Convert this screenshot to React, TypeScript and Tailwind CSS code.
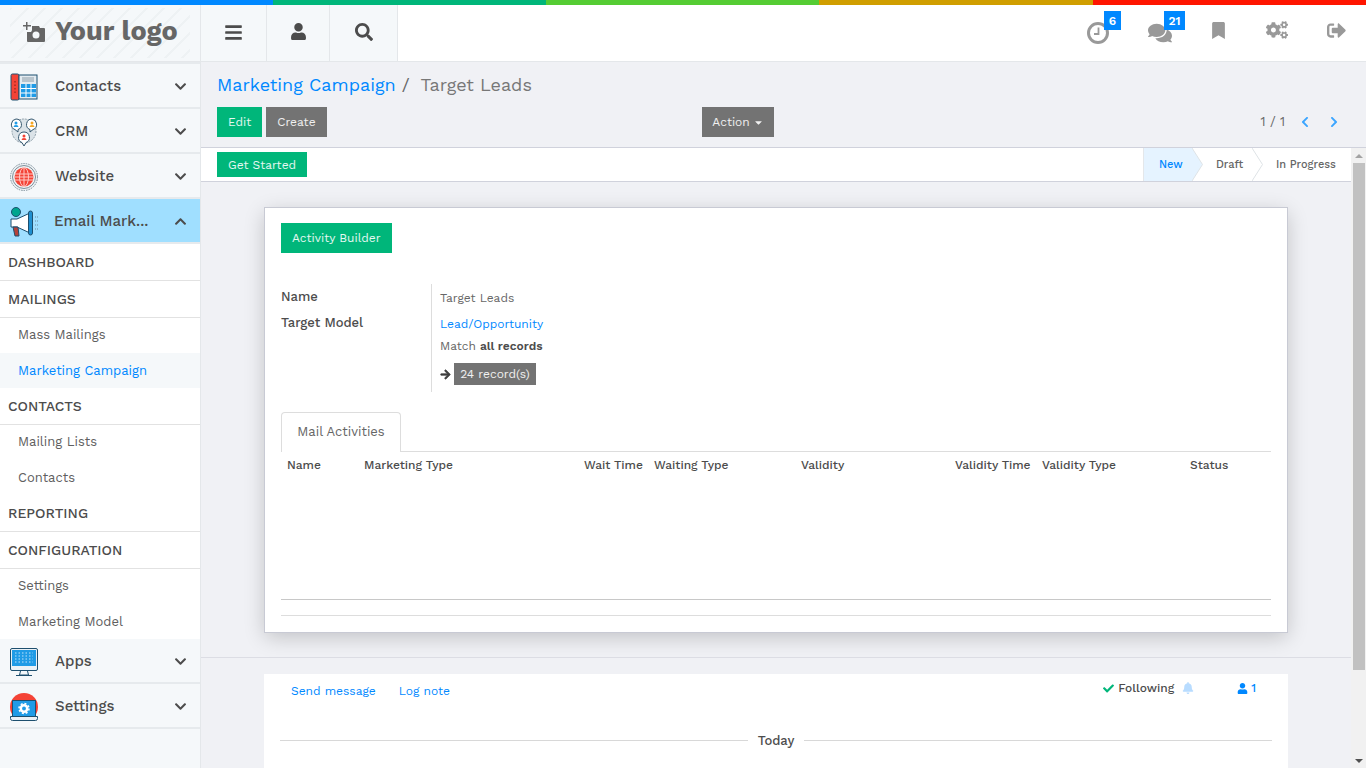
import {
  FaArrowRight,
  FaBars,
  FaBell,
  FaBookmark,
  FaCaretDown,
  FaCheck,
  FaChevronDown,
  FaChevronLeft,
  FaChevronRight,
  FaChevronUp,
  FaCogs,
  FaComments,
  FaSearch,
  FaSignOutAlt,
  FaUser,
} from "react-icons/fa";

const font = "font-['Work_Sans','Inter','Open_Sans',sans-serif]";

function PhoneIcon() {
  return (
    <svg width="28" height="28" viewBox="0 0 28 28">
      <rect x="1" y="1" width="8" height="26" rx="1.500" fill="#f44336" stroke="#1d4f6e" />
      <path d="M5 8v12" stroke="#a82a20" strokeWidth="1.500" strokeDasharray="1.500 2" />
      <rect x="9" y="2" width="18" height="24" fill="#e3ebf0" stroke="#1d4f6e" />
      <rect x="12" y="4" width="12" height="5" fill="#b8c4cc" />
      <rect x="11" y="11" width="15" height="13" fill="#1f9be6" />
      <path d="M11 15.500h15M11 20h15M16 11v13M21 11v13" stroke="#fff" />
    </svg>
  );
}

function CrmIcon() {
  return (
    <svg width="28" height="30" viewBox="0 0 28 30">
      <circle cx="14" cy="14" r="12" fill="#dbe3e8" stroke="#8fa0aa" strokeDasharray="2 1" />
      <path d="M6 2a5.500 5.500 0 0 1 2 10.600L8 15l-3-2.400A5.500 5.500 0 0 1 6 2z" fill="#fff" stroke="#33566e" />
      <path d="M22 2a5.500 5.500 0 0 0-2 10.600L20 15l3-2.400A5.500 5.500 0 0 0 22 2z" fill="#fff" stroke="#33566e" />
      <path d="M14 15a5.500 5.500 0 0 1 2 10.600L14 29l-2-3.400A5.500 5.500 0 0 1 14 15z" fill="#fff" stroke="#33566e" />
      <circle cx="6" cy="6" r="1.500" fill="#1f9be6" />
      <path d="M3.500 10a2.500 2 0 0 1 5 0z" fill="#1f9be6" />
      <circle cx="22" cy="6" r="1.500" fill="#f5a623" />
      <path d="M19.500 10a2.500 2 0 0 1 5 0z" fill="#f5a623" />
      <circle cx="14" cy="19" r="1.500" fill="#f44336" />
      <path d="M11.500 23a2.500 2 0 0 1 5 0z" fill="#f44336" />
    </svg>
  );
}

function GlobeIcon() {
  return (
    <svg width="28" height="28" viewBox="0 0 28 28">
      <circle cx="14" cy="14" r="13.500" fill="#eef2f4" stroke="#7d8f9b" strokeDasharray="1.500 1" />
      <circle cx="14" cy="14" r="11.500" fill="none" stroke="#7d8f9b" />
      <circle cx="14" cy="14" r="9.500" fill="#f44336" />
      <g fill="none" stroke="#ffc9c4">
        <ellipse cx="14" cy="14" rx="4.500" ry="9.500" />
        <path d="M14 4.500v19M4.500 11h19M4.500 14h19M4.500 17h19" />
      </g>
    </svg>
  );
}

function MegaphoneIcon() {
  return (
    <svg width="28" height="30" viewBox="0 0 28 30">
      <circle cx="6" cy="5" r="4.500" fill="#00a58e" stroke="#1d4f6e" />
      <path d="M1 12h6l13-6v20l-13-6H1z" fill="#fff" stroke="#1d4f6e" />
      <rect x="18.500" y="4" width="4" height="24" rx="2" fill="#1f8fd0" stroke="#1d4f6e" />
      <path d="M3 20h5l1 9H5z" fill="#b5413a" stroke="#1d4f6e" />
      <path d="M25 10h3M25 14h3M25 18h3M25 22h3" stroke="#6c8da3" strokeDasharray="1 1" />
    </svg>
  );
}

function MonitorIcon() {
  return (
    <svg width="28" height="28" viewBox="0 0 28 28">
      <rect x="0.500" y="0.500" width="27" height="22" rx="1.500" fill="#eaf1f6" stroke="#1d4f6e" />
      <rect x="2" y="2" width="24" height="16" fill="#1f9be6" />
      <path d="M5 5h18M5 8h18M5 11h18M5 14h18" stroke="#bfe3fa" strokeDasharray="1.500 2" />
      <path d="M10.500 23l-1 4h9l-1-4M6 27.500h16" fill="none" stroke="#1d4f6e" />
    </svg>
  );
}

function LaptopIcon() {
  return (
    <svg width="28" height="28" viewBox="0 0 28 28">
      <circle cx="14" cy="14" r="14" fill="#f44336" />
      <rect x="2.500" y="7.500" width="23" height="16" fill="#1f9be6" stroke="#1d4f6e" />
      <path d="M0.500 23.500h27v2a2 2 0 0 1-2 2h-23a2 2 0 0 1-2-2z" fill="#eaf1f6" stroke="#1d4f6e" />
      <circle cx="14" cy="15.500" r="3.200" fill="none" stroke="#fff" strokeWidth="2.500" />
      <circle cx="14" cy="15.500" r="5" fill="none" stroke="#fff" strokeWidth="1.500" strokeDasharray="2 1.900" />
    </svg>
  );
}

function MainMenu({ icon, label, open }: { icon: React.ReactNode; label: string; open?: boolean }) {
  return (
    <div
      className={`flex h-[45px] shrink-0 items-center border-b-2 border-[#e6eaed] pt-[2px] pr-[13px] pl-[10px] ${open ? "border-b-0 bg-[#a0dfff]" : "bg-[#f5f8fa]"}`}
    >
      <div className={`flex justify-start ${open ? "w-[44px]" : "w-[45px]"}`}>{icon}</div>
      <span className="flex-1 text-[15px] font-medium text-[#4c4c4c]">{label}</span>
      {open ? (
        <FaChevronUp size={13} className="text-[#4c4c4c]" />
      ) : (
        <FaChevronDown size={13} className="text-[#4c4c4c]" />
      )}
    </div>
  );
}

function SubHead({ label }: { label: string }) {
  return (
    <div className="flex h-[37px] items-center border-b border-[#e2e2e2] bg-white pl-2 text-[14px] font-medium text-[#4c4c4c]">
      {label}
    </div>
  );
}

function SubItem({ label, active, first }: { label: string; active?: boolean; first?: boolean }) {
  return (
    <div
      className={`flex h-[35px] items-center pl-[18px] text-[13px] ${first ? "pb-[2px]" : ""} ${active ? "bg-[#f5f8fa] text-[#0088ff]" : "bg-white text-[#5f5f5f]"}`}
    >
      {label}
    </div>
  );
}

function Sidebar() {
  return (
    <aside className="flex w-[201px] shrink-0 flex-col border-r border-[#e4e7ea] bg-[#f5f8fa]">
      <div className="h-[2px] bg-[#e6eaed]" />
      <MainMenu icon={<PhoneIcon />} label="Contacts" />
      <MainMenu icon={<CrmIcon />} label="CRM" />
      <MainMenu icon={<GlobeIcon />} label="Website" />
      <MainMenu icon={<MegaphoneIcon />} label="Email Mark..." open />
      <SubHead label="DASHBOARD" />
      <SubHead label="MAILINGS" />
      <SubItem label="Mass Mailings" first />
      <SubItem label="Marketing Campaign" active />
      <SubHead label="CONTACTS" />
      <SubItem label="Mailing Lists" first />
      <SubItem label="Contacts" />
      <SubHead label="REPORTING" />
      <SubHead label="CONFIGURATION" />
      <SubItem label="Settings" first />
      <SubItem label="Marketing Model" />
      <MainMenu icon={<MonitorIcon />} label="Apps" />
      <MainMenu icon={<LaptopIcon />} label="Settings" />
    </aside>
  );
}

function TopBar() {
  return (
    <header className="flex h-[57px] shrink-0 items-stretch border-b border-[#e4e7ea] bg-white">
      <div className="flex w-[201px] shrink-0 items-center border-r border-[#e4e7ea] bg-[#f5f8fa] py-[3px] pl-[10px] pr-[10px]">
        <div className="flex h-full w-full items-center gap-[10px] bg-[repeating-linear-gradient(135deg,#eef2f4_0,#eef2f4_2px,#f5f8fa_2px,#f5f8fa_12px)] pb-[3px] pl-[13px]">
          <svg width="22" height="22" viewBox="0 0 22 22" fill="#666">
            <path d="M3 1h1.500v3H8v1.500H4.500V9H3V5.500H0V4h3z" />
            <path d="M9 5h7l1 2h4a1 1 0 0 1 1 1v12a1 1 0 0 1-1 1H5a1 1 0 0 1-1-1V11h4a3 3 0 0 0 1-2z" />
            <circle cx="13" cy="14" r="3.500" fill="#f5f8fa" />
          </svg>
          <span className="text-[27px] leading-none font-bold text-[#666]">Your logo</span>
        </div>
      </div>
      <div className="flex h-full w-[66px] items-center justify-center border-r border-[#e4e7ea] bg-[#f5f8fa] pb-[2px] text-[#4c4c4c]">
        <FaBars size={19} />
      </div>
      <div className="flex h-full w-[63px] items-center justify-center border-r border-[#e4e7ea] bg-[#f5f8fa] pb-[3px] text-[#4c4c4c]">
        <FaUser size={17} />
      </div>
      <div className="flex h-full w-[68px] items-center justify-center border-r border-[#e4e7ea] bg-[#f5f8fa] pb-[2px] text-[#4c4c4c]">
        <FaSearch size={18} />
      </div>
      <div className="flex-1" />
      <div className="flex items-stretch gap-[39px] pr-[20px] text-[#999]">
        <div className="relative flex items-center">
          <svg width="22" height="22" viewBox="0 0 22 22" fill="none" stroke="#999">
            <circle cx="11" cy="11" r="9.500" strokeWidth="3" />
            <path d="M11.500 5.500v6.500H7" strokeWidth="1.800" />
          </svg>
          <span className="absolute top-[6px] left-[17px] flex h-[19px] w-[17px] items-center justify-center bg-[#0088ff] text-[12px] font-semibold text-white">
            6
          </span>
        </div>
        <div className="relative -mr-px flex items-center">
          <FaComments size={24} />
          <span className="absolute top-[6px] left-[16px] flex h-[19px] w-[21px] items-center justify-center bg-[#0088ff] text-[12px] font-semibold text-white">
            21
          </span>
        </div>
        <div className="flex items-center pb-[6px]">
          <FaBookmark size={17} />
        </div>
        <div className="flex items-center pb-[6px]">
          <FaCogs size={22} />
        </div>
        <div className="flex items-center pb-[6px]">
          <FaSignOutAlt size={19} />
        </div>
      </div>
    </header>
  );
}

function Btn({ label, color, h = "h-[30px]" }: { label: string; color: string; h?: string }) {
  return (
    <span className={`flex items-center px-[11px] text-[12px] text-white/90 ${h} ${color}`}>{label}</span>
  );
}

function ControlPanel() {
  return (
    <div className="shrink-0 bg-[#f0f1f5]">
      <div className="flex h-[45px] items-center pl-[16px] text-[18px]">
        <span className="text-[#0088ff]">Marketing Campaign</span>
        <span className="ml-[6px] text-[#666]">/</span>
        <span className="ml-[11px] text-[#777]">Target Leads</span>
      </div>
      <div className="flex h-[40px] items-start pl-[16px]">
        <div className="flex gap-[4px]">
          <Btn label="Edit" color="bg-[#00b67a]" />
          <Btn label="Create" color="bg-[#737373]" />
        </div>
        <div className="ml-[375px]">
          <span className="flex h-[30px] w-[72px] items-center justify-center gap-[3px] bg-[#737373] pl-[1px] text-[12px] text-white/90">
            Action <FaCaretDown size={11} />
          </span>
        </div>
        <div className="ml-auto flex h-[30px] items-center pr-[26px] text-[13px] text-[#666]">
          <span>1 / 1</span>
          <FaChevronLeft size={12} className="ml-[14px] text-[#3ba5ff]" />
          <FaChevronRight size={12} className="ml-[17px] text-[#3ba5ff]" />
        </div>
      </div>
    </div>
  );
}

function StatusBar() {
  return (
    <div className="flex h-[34px] shrink-0 items-center justify-between border-b border-[#d0d2dc] bg-white pl-[16px]">
      <Btn label="Get Started" color="bg-[#00b67a]" h="h-[25px]" />
      <div className="flex h-full items-center text-[11px] font-medium">
        <div className="relative flex h-full w-[49px] items-center border-l border-[#e4e7ea] bg-[#e5f3ff] pt-[2px] pl-[15px] text-[#0088ff]">
          New
          <svg width="11" height="33" viewBox="0 0 11 33" className="absolute top-0 left-full z-10">
            <path d="M0 0l10.500 16.500L0 33z" fill="#e5f3ff" />
            <path d="M0 0l10.500 16.500L0 33" fill="none" stroke="#dfe3e6" />
          </svg>
        </div>
        <div className="relative flex h-full w-[60px] items-center pt-[2px] pl-[24px] text-[#666]">
          Draft
          <svg width="11" height="33" viewBox="0 0 11 33" className="absolute top-0 left-full">
            <path d="M0 0l10.500 16.500L0 33" fill="#fff" stroke="#dfe3e6" />
          </svg>
        </div>
        <div className="flex h-full w-[99px] items-center pt-[2px] pl-[24px] text-[#666]">In Progress</div>
      </div>
    </div>
  );
}

function Sheet() {
  const cols = [
    { label: "Name", w: "w-[77px]" },
    { label: "Marketing Type", w: "w-[220px]" },
    { label: "Wait Time", w: "w-[70px]" },
    { label: "Waiting Type", w: "w-[147px]" },
    { label: "Validity", w: "w-[154px]" },
    { label: "Validity Time", w: "w-[87px]" },
    { label: "Validity Type", w: "w-[148px]" },
    { label: "Status", w: "w-[70px]" },
  ];
  return (
    <div className="mx-[63px] mt-[25px] h-[426px] border border-[#c8cad4] bg-white px-[16px] pt-[15px] shadow-[0_5px_20px_-1px_rgba(0,0,0,0.2)]">
      <span className="inline-flex h-[30px] items-center bg-[#00b67a] px-[11px] align-top text-[12px] text-white/90">
        Activity Builder
      </span>
      <div className="mt-[31px] flex h-[108px]">
        <div className="w-[150px] text-[13px] font-medium text-[#4c4c4c]">
          <div className="flex h-[26px] items-center">Name</div>
          <div className="flex h-[26px] items-center">Target Model</div>
        </div>
        <div className="border-l border-[#ddd] pl-[8px] text-[12px] text-[#666]">
          <div className="flex h-[27px] items-center">Target Leads</div>
          <div className="flex h-[25px] items-center text-[#0088ff]">Lead/Opportunity</div>
          <div className="flex h-[19px] items-center">
            Match <b className="ml-1 font-semibold text-[#4c4c4c]">all records</b>
          </div>
          <div className="mt-[8px] flex items-center">
            <FaArrowRight size={11} className="stroke-current stroke-[30] text-[#3f3f3f]" />
            <span className="ml-[3px] flex h-[22px] w-[82px] items-center justify-center bg-[#737373] text-white/90">
              24 record(s)
            </span>
          </div>
        </div>
      </div>
      <div className="mt-[20px] flex h-[40px] border-b border-[#ddd]">
        <div className="relative z-10 flex h-[40px] w-[120px] items-center justify-center rounded-t border border-b-0 border-[#ddd] bg-white pb-[2px] text-[13px] text-[#666]">
          Mail Activities
        </div>
      </div>
      <div className="flex h-[148px] items-start border-b border-[#c8c8c8] pt-[4px] pl-[6px] text-[12px] font-medium text-[#4c4c4c]">
        {cols.map((c) => (
          <div key={c.label} className={`${c.w} shrink-0`}>
            {c.label}
          </div>
        ))}
      </div>
      <div className="mt-[15px] border-b border-[#ddd]" />
    </div>
  );
}

function Chatter() {
  return (
    <div className="mt-[24px] border-t border-[#dcdde4] pt-[16px]">
      <div className="mx-[63px] h-[200px] bg-white px-[16px]">
        <div className="flex h-[34px] items-center text-[12px]">
          <span className="ml-[11px] text-[#0088ff]">Send message</span>
          <span className="ml-[23px] text-[#0088ff]">Log note</span>
          <div className="mb-[6px] ml-auto flex items-center">
            <FaCheck size={11} className="text-[#00b67a]" />
            <span className="ml-[4px] font-medium text-[#4c4c4c]">Following</span>
            <FaBell size={12} className="ml-[8px] text-[#b8dcff]" />
            <FaUser size={11} className="ml-[43px] text-[#0088ff]" />
            <span className="mr-[16px] ml-[3px] font-medium text-[#0088ff]">1</span>
          </div>
        </div>
        <div className="mt-[23px] flex items-center gap-[10px] text-[13px] font-medium text-[#4c4c4c]">
          <div className="h-px flex-1 bg-[#d8d8d8]" />
          Today
          <div className="h-px flex-1 bg-[#d8d8d8]" />
        </div>
      </div>
    </div>
  );
}

function ScrollBar() {
  return (
    <div className="flex w-[15px] shrink-0 flex-col items-center justify-between bg-[#f1f1f1]">
      <div className="flex w-full flex-col items-center">
        <div className="flex h-[15px] items-center justify-center">
          <div className="h-0 w-0 border-x-[4px] border-b-[4px] border-x-transparent border-b-[#a3a3a3]" />
        </div>
        <div className="ml-px h-[507px] w-[12px] bg-[#c1c1c1]" />
      </div>
      <div className="flex h-[15px] items-center justify-center">
        <div className="h-0 w-0 border-x-[4px] border-t-[4px] border-x-transparent border-t-[#505050]" />
      </div>
    </div>
  );
}

export default function App() {
  return (
    <div className={`flex h-[768px] w-[1366px] flex-col overflow-hidden bg-white ${font}`}>
      <div className="flex h-[5px] shrink-0">
        <div className="w-[273px] bg-[#0088ff]" />
        <div className="w-[273px] bg-[#00b67a]" />
        <div className="w-[273px] bg-[#55cc33]" />
        <div className="w-[274px] bg-[#d09e00]" />
        <div className="flex-1 bg-[#ff1500]" />
      </div>
      <TopBar />
      <div className="flex min-h-0 flex-1">
        <Sidebar />
        <main className="flex min-w-0 flex-1 flex-col overflow-hidden bg-[#f0f1f5]">
          <ControlPanel />
          <div className="flex min-h-0 flex-1 border-t border-[#d0d2dc]">
            <div className="min-w-0 flex-1 overflow-hidden">
              <StatusBar />
              <Sheet />
              <Chatter />
            </div>
            <ScrollBar />
          </div>
        </main>
      </div>
    </div>
  );
}
